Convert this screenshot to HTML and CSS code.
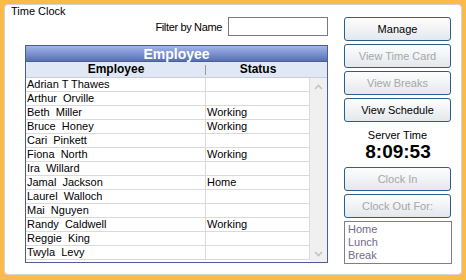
FILE: index.html
```html
<!DOCTYPE html>
<html>
<head>
<meta charset="utf-8">
<link rel="stylesheet" href="styles.css">
</head>
<body>
<div class="group">
  <div class="title">Time Clock</div>
  <div class="content">
    <div class="left">
      <div class="filter">
        <span class="filter-label">Filter by Name</span>
        <input class="filter-input" type="text">
      </div>
      <div class="grid">
        <div class="band">Employee</div>
        <div class="colhead">
          <div class="ch ch1">Employee</div>
          <div class="ch ch2">Status</div>
        </div>
        <div class="body">
          <div class="rows">
            <div class="row"><div class="c1">Adrian T Thawes</div><div class="c2"></div></div>
            <div class="row"><div class="c1">Arthur  Orville</div><div class="c2"></div></div>
            <div class="row"><div class="c1">Beth  Miller</div><div class="c2">Working</div></div>
            <div class="row"><div class="c1">Bruce  Honey</div><div class="c2">Working</div></div>
            <div class="row"><div class="c1">Cari  Pinkett</div><div class="c2"></div></div>
            <div class="row"><div class="c1">Fiona  North</div><div class="c2">Working</div></div>
            <div class="row"><div class="c1">Ira  Willard</div><div class="c2"></div></div>
            <div class="row"><div class="c1">Jamal  Jackson</div><div class="c2">Home</div></div>
            <div class="row"><div class="c1">Laurel  Walloch</div><div class="c2"></div></div>
            <div class="row"><div class="c1">Mai  Nguyen</div><div class="c2"></div></div>
            <div class="row"><div class="c1">Randy  Caldwell</div><div class="c2">Working</div></div>
            <div class="row"><div class="c1">Reggie  King</div><div class="c2"></div></div>
            <div class="row"><div class="c1">Twyla  Levy</div><div class="c2"></div></div>
          </div>
          <div class="scroll">
            <svg class="arrow" width="9" height="6" viewBox="0 0 9 6"><path d="M1 5 L4.5 1.5 L8 5" fill="none" stroke="#c4c4c4" stroke-width="1.6"/></svg>
            <svg class="arrow" width="9" height="6" viewBox="0 0 9 6"><path d="M1 1 L4.5 4.5 L8 1" fill="none" stroke="#c4c4c4" stroke-width="1.6"/></svg>
          </div>
        </div>
      </div>
    </div>
    <div class="right">
      <div class="btn">Manage</div>
      <div class="btn disabled">View Time Card</div>
      <div class="btn disabled">View Breaks</div>
      <div class="btn">View Schedule</div>
      <div class="server-label">Server Time</div>
      <div class="server-time">8:09:53</div>
      <div class="btn disabled">Clock In</div>
      <div class="btn disabled">Clock Out For:</div>
      <div class="listbox">
        <div>Home</div>
        <div>Lunch</div>
        <div>Break</div>
      </div>
    </div>
  </div>
</div>
</body>
</html>
```

FILE: styles.css
```css
html, body {
  margin: 0;
  padding: 0;
}
body {
  background: #fbbb48;
  width: 466px;
  height: 280px;
  padding: 4px;
  box-sizing: border-box;
  font-family: "Liberation Sans", Arial, sans-serif;
  font-size: 11px;
  color: #000;
}
.group {
  width: 458px;
  height: 271px;
  box-sizing: border-box;
  background: #fff;
  border: 1px solid #d3d3d3;
  border-radius: 4px;
}
.title {
  height: 12px;
  line-height: 12px;
  padding-left: 6px;
  white-space: nowrap;
}
.content {
  display: flex;
  padding-left: 20px;
  gap: 16px;
}
.left {
  width: 303px;
  display: flex;
  flex-direction: column;
}
.filter {
  display: flex;
  justify-content: flex-end;
  align-items: center;
  gap: 6px;
  height: 19px;
}
.filter-label {
  letter-spacing: -0.35px;
}
.filter-input {
  width: 100px;
  height: 19px;
  box-sizing: border-box;
  border: 1px solid #7a7a7a;
  margin: 0;
  padding: 0;
  background: #fff;
  outline: none;
}
.grid {
  margin-top: 9px;
  width: 303px;
  height: 218px;
  box-sizing: border-box;
  border: 1px solid #4c5f90;
  display: flex;
  flex-direction: column;
}
.band {
  height: 16px;
  line-height: 16px;
  text-align: center;
  color: #fff;
  font-weight: bold;
  font-size: 14px;
  background: linear-gradient(#a2b4e6, #7d93d0 50%, #5770b3);
  border-bottom: 1px solid #4a5f98;
  box-sizing: border-box;
}
.colhead {
  height: 16px;
  display: flex;
  background: #dfe8f4;
  border-bottom: 1px solid #c8ced8;
  box-sizing: border-box;
}
.ch {
  font-weight: bold;
  font-size: 12px;
  line-height: 15px;
  text-align: center;
  position: relative;
}
.ch1 {
  width: 180px;
}
.ch1::after {
  content: "";
  position: absolute;
  right: 0;
  top: 3px;
  height: 10px;
  border-right: 1px solid #9a9a9a;
}
.ch2 {
  width: 104px;
}
.body {
  flex: 1;
  display: flex;
}
.rows {
  width: 284px;
  display: flex;
  flex-direction: column;
}
.row {
  display: flex;
  height: 14px;
  box-sizing: border-box;
  border-bottom: 1px solid #dadada;
}
.c1, .c2 {
  line-height: 13px;
  padding-left: 1px;
  white-space: pre;
  box-sizing: border-box;
}
.c1 {
  width: 180px;
  border-right: 1px solid #dadada;
}
.c2 {
  width: 104px;
  border-right: 1px solid #dadada;
}
.scroll {
  width: 17px;
  background: #f0f0f0;
  display: flex;
  flex-direction: column;
  justify-content: space-between;
  align-items: center;
  padding: 6px 0 5px;
  box-sizing: border-box;
}
.arrow {
  display: block;
}
.right {
  width: 108px;
  display: flex;
  flex-direction: column;
}
.btn {
  width: 107px;
  height: 24px;
  box-sizing: border-box;
  border: 1px solid #2d5d89;
  border-radius: 3px;
  background: linear-gradient(#fdfdfd, #f1f3f5 50%, #e3e8ec);
  text-align: center;
  line-height: 22px;
  margin-bottom: 3px;
  white-space: nowrap;
}
.btn.disabled {
  color: #a7a7a7;
}
.server-label {
  margin-top: 4px;
  text-align: center;
  line-height: 13px;
  padding-right: 1px;
}
.server-time {
  text-align: center;
  font-weight: bold;
  font-size: 19px;
  line-height: 20px;
  margin-bottom: 5px;
}
.listbox {
  margin-top: 0;
  width: 108px;
  height: 43px;
  box-sizing: border-box;
  border: 1px solid #7b8089;
  padding: 1px 3px;
  color: #6f6a8c;
  line-height: 13px;
}
```
